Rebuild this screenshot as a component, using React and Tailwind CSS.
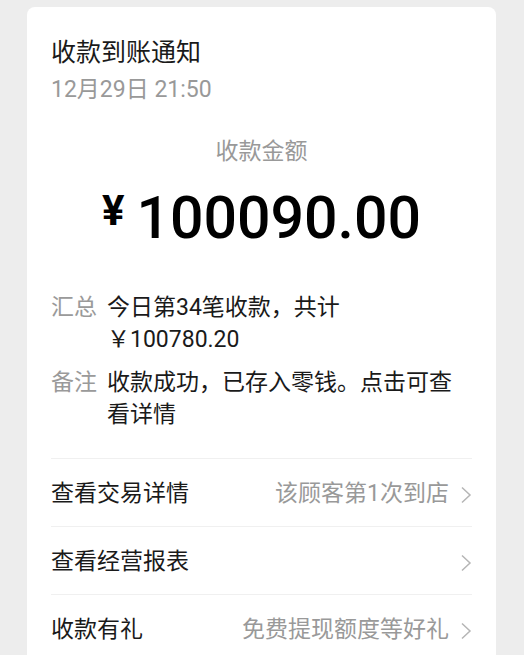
import React from "react";

// --- 데이터 ---
const summary = [
  { label: "汇总", lines: ["今日第34笔收款，共计", "￥100780.20"] },
  { label: "备注", lines: ["收款成功，已存入零钱。点击可查看详情"] },
];

const links = [
  { title: "查看交易详情", hint: "该顾客第1次到店" },
  { title: "查看经营报表", hint: "" },
  { title: "收款有礼", hint: "免费提现额度等好礼" },
];

const Chevron = () => (
  <svg width="12" height="18" viewBox="0 0 12 18" fill="none">
    <path d="M2 1.5 L10 9 L2 16.5" stroke="#b5b5b5" strokeWidth="1.5" />
  </svg>
);

export default function App() {
  return (
    <div
      className="h-[655px] overflow-hidden bg-[#ededed] pl-[27px] pr-[28px] pt-[7px]"
      style={{ fontFamily: 'Roboto, "Noto Sans CJK SC", sans-serif' }}
    >
      <div className="rounded-[8px] bg-white px-6 pt-[30px] pb-10">
        {/* 헤더 */}
        <div className="text-[25px] leading-[32px] text-[#1a1a1a]">收款到账通知</div>
        <div className="text-[23px] leading-[30px] text-[#999999] mt-[6px]">12月29日 21:50</div>

        {/* 금액 */}
        <div className="mt-[31px] text-center text-[23px] leading-[32px] text-[#999999]">
          收款金额
        </div>
        <div className="mt-[20px] flex items-start justify-center gap-[12px] text-black">
          <span className="mt-[2px] text-[42px] leading-none font-bold">¥</span>
          <span className="text-[59px] leading-none font-medium">100090.00</span>
        </div>

        {/* 요약 */}
        <div className="mt-[45px] flex flex-col gap-[11px] pb-[27px]">
          {summary.map((s) => (
            <div key={s.label} className="flex gap-[10px] text-[23px] leading-[32px]">
              <div className="shrink-0 text-[#9a9a9a]">{s.label}</div>
              <div className="text-[#1a1a1a]">
                {s.lines.map((l) => (
                  <div key={l}>{l}</div>
                ))}
              </div>
            </div>
          ))}
        </div>

        {/* 링크 */}
        {links.map((r) => (
          <div
            key={r.title}
            className="flex h-[68px] items-center justify-between border-t border-[#f0f0f0] pt-[4px] text-[23px]"
          >
            <div className="text-[#1a1a1a]">{r.title}</div>
            <div className="flex items-center gap-[11px]">
              {r.hint && <span className="text-[#999999]">{r.hint}</span>}
              <Chevron />
            </div>
          </div>
        ))}
      </div>
    </div>
  );
}
